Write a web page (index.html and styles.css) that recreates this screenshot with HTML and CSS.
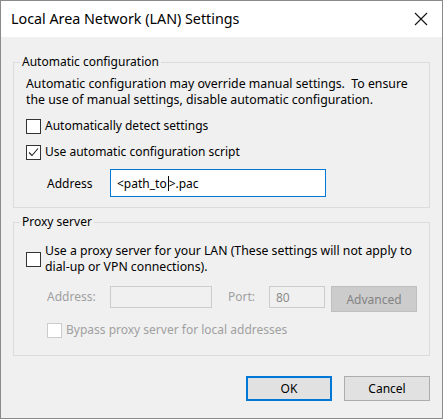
FILE: index.html
```html
<!DOCTYPE html>
<html>
<head>
<meta charset="utf-8">
<link rel="stylesheet" href="styles.css">
</head>
<body>
<div class="window">
  <div class="titlebar">
    <span class="title">Local Area Network (LAN) Settings</span>
    <svg class="close" width="14" height="14" viewBox="0 0 14 14"><path d="M1 1 L13 13 M13 1 L1 13" stroke="#111" stroke-width="1.1" fill="none"/></svg>
  </div>
  <div class="content">
    <fieldset class="group group-auto">
      <legend>Automatic configuration</legend>
      <p class="note">Automatic configuration may override manual settings.&nbsp; To ensure the use of manual settings, disable automatic configuration.</p>
      <div class="check-row row-detect"><span class="box"></span><span>Automatically detect settings</span></div>
      <div class="check-row row-script"><span class="box"><svg width="13" height="13" viewBox="0 0 13 13"><path d="M2 6.5 L5 9.5 L11 2.5" stroke="#222" stroke-width="1.1" fill="none"/></svg></span><span>Use automatic configuration script</span></div>
      <div class="addr-row">
        <span class="addr-label">Address</span>
        <div class="input focused">&lt;path_to<span class="caret"></span>&gt;.pac</div>
      </div>
    </fieldset>
    <fieldset class="group group-proxy">
      <legend>Proxy server</legend>
      <div class="check-row row-proxy"><span class="box"></span><span class="wrap">Use a proxy server for your LAN (These settings will not apply to dial-up or VPN connections).</span></div>
      <div class="proxy-row">
        <span class="dim lbl-address">Address:</span>
        <div class="input disabled w-addr"></div>
        <span class="dim lbl-port">Port:</span>
        <div class="input disabled w-port">80</div>
        <div class="btn btn-disabled">Advanced</div>
      </div>
      <div class="check-row row-bypass"><span class="box box-dim"></span><span class="dim">Bypass proxy server for local addresses</span></div>
    </fieldset>
    <div class="buttons">
      <div class="btn btn-default">OK</div>
      <div class="btn">Cancel</div>
    </div>
  </div>
</div>
</body>
</html>
```
FILE: styles.css
```css
* { box-sizing: border-box; }
html, body { margin: 0; padding: 0; background: #f0f0f0; }
body { font-family: "Noto Sans", "Open Sans", sans-serif; font-size: 12px; color: #000; }
.window {
  width: 443px; height: 419px;
  border: 1px solid #8a8a8a;
  display: flex; flex-direction: column;
  background: #f0f0f0;
}
.titlebar {
  height: 36px; background: #fff;
  display: flex; align-items: center; justify-content: space-between;
  padding: 0 14px 0 10px;
}
.title { font-size: 14.3px; line-height: 20px; color: #000; }
.close { display: block; }
.content { padding: 0 12px; flex: 1; display: flex; flex-direction: column; }
.group {
  margin: 0; border: 1px solid #dcdcdc; padding: 0 0 0 12px;
  min-width: 0;
}
.group legend { padding: 0 2px; margin-left: -6px; line-height: 16px; }
.group-auto { margin-top: 17px; height: 154px; }
.group-proxy { margin-top: 6px; height: 142px; }
.note { margin: 6px 0 0 0; line-height: 16px; width: 385px; font-size: 12.3px; }
.check-row { display: flex; align-items: center; line-height: 16px; }
.box {
  width: 15px; height: 15px; border: 1px solid #333; background: #fff;
  margin-right: 4px; flex: none; display: flex; align-items: center; justify-content: center;
}
.box-dim { border-color: #cccccc; }
.row-detect { margin-top: 10px; }
.row-script { margin-top: 10px; }
.addr-row { display: flex; align-items: center; margin-top: 9px; }
.addr-label { margin-left: 21px; width: 63px; }
.input {
  height: 28px; border: 1px solid #7a7a7a; background: #fff;
  display: flex; align-items: center; padding-left: 6px;
}
.focused { width: 216px; border-color: #0078d7; }
.caret { display: inline-block; width: 1px; height: 15px; background: #000; margin: 0 0 0 1px; }
.row-proxy { margin-top: 13px; }
.row-proxy .wrap { width: 385px; font-size: 12.25px; }
.proxy-row { display: flex; align-items: flex-start; margin-top: 11px; }
.dim { color: #a0a0a0; }
.lbl-address { margin-left: 21px; width: 63px; line-height: 22px; }
.disabled { height: 22px; border-color: #cccccc; background: #f0f0f0; color: #8c8c8c; }
.w-addr { width: 102px; }
.lbl-port { margin-left: 16px; width: 41px; line-height: 22px; }
.w-port { width: 56px; }
.btn {
  width: 86px; height: 25px; border: 1px solid #adadad; background: #e1e1e1;
  display: flex; align-items: center; justify-content: center;
}
.btn-disabled { margin-left: 6px; height: 26px; background: #cccccc; border-color: #bfbfbf; color: #838383; }
.row-bypass { margin-top: 10px; padding-left: 21px; }
.buttons { display: flex; justify-content: flex-end; gap: 12px; margin-top: 20px; }
.btn-default { border: 2px solid #0078d7; }
```
